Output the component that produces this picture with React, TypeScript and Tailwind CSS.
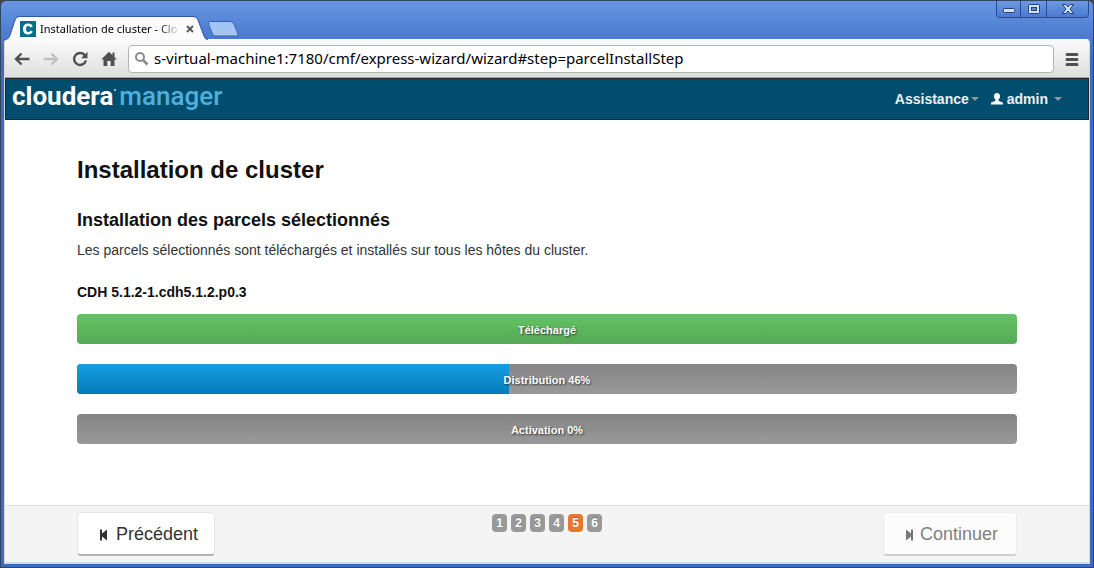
import type { ReactNode } from 'react';

const steps = [1, 2, 3, 4, 5, 6];
const currentStep = 5;

type Stage = { label: string; percent: number; fill: string };

const stages: Stage[] = [
  { label: 'Téléchargé', percent: 100, fill: 'from-[#62c462] to-[#57a957]' },
  { label: 'Distribution 46%', percent: 46, fill: 'from-[#179de3] to-[#047cbb]' },
  { label: 'Activation 0%', percent: 0, fill: 'from-[#179de3] to-[#047cbb]' },
];

function WindowButton({ label, className, children }: { label: string; className: string; children: ReactNode }) {
  return (
    <button
      type="button"
      aria-label={label}
      className={`flex h-4 items-center justify-center border-r border-[#2b4a8c] bg-linear-to-b from-[#6d9ae0] to-[#4a79d0] ${className}`}
    >
      {children}
    </button>
  );
}

function TitleBar() {
  return (
    <div className="flex h-9.5 items-end justify-between">
      <div className="flex items-end">
        <div className="relative -mb-px flex h-6 w-51 items-center pt-0.5 pl-4">
          <svg className="absolute inset-0 h-6 w-51" viewBox="0 0 204 24" aria-hidden="true">
            <path d="M0 24C4 24 5 22 6 19L11 4Q12 1 15 1H190Q193 1 194 4L200 20Q201 24 204 24Z" fill="#fbfbfb" />
            <path d="M0 23.500C4 23.500 5 22 6 19L11 4Q12 .5 15 .5H190Q193 .5 194 4L200 20Q201 23.500 204 23.500" fill="none" stroke="#2f55a4" />
          </svg>
          <svg className="relative h-4 w-4 shrink-0" viewBox="0 0 16 16" aria-hidden="true">
            <rect width="16" height="16" fill="#04708a" />
            <path d="M12.800 5.200C11.800 3.200 10.300 2.500 8.200 2.500C5 2.500 3 4.600 3 8S5 13.500 8.200 13.500C10.300 13.500 11.800 12.800 12.800 10.800L10.300 9.500C9.800 10.500 9.200 11 8.300 11C6.800 11 6 9.800 6 8S6.800 5 8.300 5C9.200 5 9.800 5.500 10.300 6.500Z" fill="#fff" />
          </svg>
          <a
            href="#parcelInstallStep"
            className="relative ml-1 w-35 bg-linear-to-r from-black from-85% to-transparent bg-clip-text font-['Noto_Sans','Open_Sans',sans-serif] text-[11px] leading-4 whitespace-nowrap text-transparent"
          >
            Installation de cluster - Clo
          </a>
          <button type="button" aria-label="Fermer l'onglet" className="relative ml-0.5 flex h-4 w-4 items-center justify-center">
            <svg className="h-2 w-2" viewBox="0 0 8 8" aria-hidden="true">
              <path d="M1 1L7 7M7 1L1 7" stroke="#555" strokeWidth="1.800" />
            </svg>
          </button>
        </div>
        <button type="button" aria-label="Nouvel onglet" className="mb-0.5">
          <svg className="block h-4 w-8" viewBox="0 0 32 16" aria-hidden="true">
            <path d="M2.500 .5H22.500Q25 .5 26 3L30 13Q30.500 15 28.500 15H7.500Q5.500 15 4.500 13L.5 3Q0 .5 2.500 .5Z" fill="#a2c5f3" stroke="#3a62b4" />
          </svg>
        </button>
      </div>
      <div className="mr-px flex self-start rounded-b border border-t-0 border-r-0 border-[#2b4a8c]">
        <WindowButton label="Réduire" className="w-6 rounded-bl">
          <svg className="mt-1 h-1.5 w-3" viewBox="0 0 12 6" aria-hidden="true">
            <rect x=".5" y=".5" width="11" height="4" rx="1" fill="#d5e2f6" stroke="#23427f" />
          </svg>
        </WindowButton>
        <WindowButton label="Agrandir" className="w-6.5">
          <svg className="h-2.5 w-3" viewBox="0 0 12 10" aria-hidden="true">
            <rect x=".5" y=".5" width="11" height="9" rx="1" fill="#d5e2f6" stroke="#23427f" />
            <rect x="3.500" y="3.500" width="5" height="3" fill="#5c8ad8" stroke="#23427f" />
          </svg>
        </WindowButton>
        <WindowButton label="Fermer" className="w-10.5 rounded-br">
          <svg className="h-2.5 w-3" viewBox="0 0 12 10" aria-hidden="true">
            <path d="M.5 .5H4L6 3L8 .5H11.500L8 5L11.500 9.500H8L6 7L4 9.500H.5L4 5Z" fill="#d5e2f6" stroke="#23427f" strokeLinejoin="round" />
          </svg>
        </WindowButton>
      </div>
    </div>
  );
}

function ToolButton({ label, children }: { label: string; children: ReactNode }) {
  return (
    <button type="button" aria-label={label} className="flex h-6 w-7 items-center justify-center">
      <svg className="h-4 w-4" viewBox="0 0 16 16" aria-hidden="true">
        {children}
      </svg>
    </button>
  );
}

function Toolbar() {
  return (
    <div className="flex h-9.5 shrink-0 items-center rounded-t-sm border-b border-b-[#a5a5a5] bg-linear-to-b from-[#fbfbfb] to-[#dedede] pr-1.25 pl-0.75">
      <div className="mr-1.25 flex gap-px">
        <ToolButton label="Précédent">
          <path d="M15.500 8H2.500M7.500 2.500L2 8L7.500 13.500" fill="none" stroke="#505050" strokeWidth="2.400" />
        </ToolButton>
        <ToolButton label="Suivant">
          <path d="M.5 8H13.500M8.500 2.500L14 8L8.500 13.500" fill="none" stroke="#c0c0c0" strokeWidth="2.400" />
        </ToolButton>
        <ToolButton label="Actualiser">
          <path d="M13 4.500A6 6 0 1 0 13.900 9.500" fill="none" stroke="#505050" strokeWidth="2.400" />
          <path d="M15.500 .8V7.300H9Z" fill="#505050" />
        </ToolButton>
        <ToolButton label="Accueil">
          <path d="M8 .8L11.500 4.200V1.500H13.500V6.100L15.800 8.500H13.500V15H9.700V10H6.300V15H2.500V8.500H.2Z" fill="#505050" />
        </ToolButton>
      </div>
      <div className="flex h-7 grow items-center rounded-sm border border-[#b4b4b4] bg-white pl-1.25">
        <svg className="h-4 w-4 shrink-0" viewBox="0 0 16 16" aria-hidden="true">
          <circle cx="6" cy="6" r="4" fill="none" stroke="#8a8a8a" strokeWidth="2" />
          <path d="M9 9L13.500 13.500" stroke="#8a8a8a" strokeWidth="2.600" />
        </svg>
        <input
          type="text"
          aria-label="Adresse"
          defaultValue="s-virtual-machine1:7180/cmf/express-wizard/wizard#step=parcelInstallStep"
          className="mb-0.5 ml-1 min-w-0 grow bg-transparent font-['Noto_Sans','Open_Sans',sans-serif] text-[15px] leading-6 text-black outline-none"
        />
      </div>
      <button type="button" aria-label="Menu" className="ml-1.5 flex h-6 w-6 items-center justify-center">
        <svg className="h-3.5 w-3.5" viewBox="0 0 14 14" aria-hidden="true">
          <path d="M2 2.500H12M2 7.500H12M2 12.500H12" stroke="#505050" strokeWidth="3" strokeLinecap="round" />
        </svg>
      </button>
    </div>
  );
}

function Caret() {
  return (
    <svg className="h-1 w-2" viewBox="0 0 8 4" aria-hidden="true">
      <path d="M0 0H8L4 4Z" fill="#8c9aa0" />
    </svg>
  );
}

function Header() {
  return (
    <header className="flex h-10.5 shrink-0 items-center justify-between border border-[#252525] bg-[#004d6e] pr-6.5 pl-1.5">
      <a href="#accueil" className="mb-1.5 flex items-center gap-1.5 font-['Roboto','Open_Sans',sans-serif] text-[26px] leading-8">
        <span className="relative font-bold text-white">
          cloudera
          <svg className="absolute top-2 -right-1 h-1 w-1" viewBox="0 0 4 4" aria-hidden="true">
            <circle cx="2" cy="2" r="1.200" fill="#9bb5c2" />
          </svg>
        </span>
        <span className="font-medium text-[#4fb0dc]">manager</span>
      </a>
      <nav className="flex items-center gap-3 text-sm font-bold text-[#eee]">
        <button type="button" className="flex items-center gap-0.5">
          Assistance
          <Caret />
        </button>
        <button type="button" className="flex items-center">
          <svg className="mr-1 h-3 w-3" viewBox="0 0 12 12" aria-hidden="true">
            <path d="M6 0C8 0 9 1.400 9 3.200C9 4.800 8.300 5.900 7.500 6.600V7.600C8 8.600 12 8.900 12 10.400V11.500H0V10.400C0 8.900 4 8.600 4.500 7.600V6.600C3.700 5.900 3 4.800 3 3.200C3 1.400 4 0 6 0Z" fill="#fff" />
          </svg>
          <span className="mr-1.5">admin</span>
          <Caret />
        </button>
      </nav>
    </header>
  );
}

function StageBar({ label, percent, fill }: Stage) {
  return (
    <div
      role="progressbar"
      aria-label={label}
      aria-valuenow={percent}
      className="grid h-7.5 overflow-hidden rounded bg-linear-to-b from-[#858585] to-[#999]"
    >
      <div className={`col-start-1 row-start-1 bg-linear-to-b ${fill}`} style={{ width: `${percent}%` }} />
      <span className="relative col-start-1 row-start-1 self-center pt-0.5 text-center text-[11px] leading-4 font-bold text-white [text-shadow:1px_1px_2px_#333]">
        {label}
      </span>
    </div>
  );
}

const navButton =
  'flex h-11 items-center rounded border border-b-2 pl-5 text-lg leading-6';

function Footer() {
  return (
    <footer className="shrink-0 border-t border-[#ddd] bg-[#f4f4f4] px-18 pt-1.5 pb-1.5">
      <div className="grid grid-cols-3 items-start">
        <button type="button" className={`${navButton} justify-self-start border-[#e6e6e6] border-b-[#b3b3b3] bg-white pr-4 text-[#333]`}>
          <svg className="mt-0.5 mr-2 h-3 w-2.5" viewBox="0 0 10 12" aria-hidden="true">
            <path d="M2 .5H4V4.500L9 .5V11.500L4 7.500V11.500H2Z" fill="#333" />
          </svg>
          Précédent
        </button>
        <ol className="mt-0.5 flex justify-center gap-1 text-xs leading-4 font-bold text-white">
          {steps.map((step) => (
            <li
              key={step}
              aria-current={step === currentStep ? 'step' : undefined}
              className={`h-4.5 w-3.75 rounded-sm pt-px text-center [text-shadow:0_-1px_0_rgba(0,0,0,0.25)] ${step === currentStep ? 'bg-[#e8772e]' : 'bg-[#999]'}`}
            >
              {step}
            </li>
          ))}
        </ol>
        <button type="button" disabled className={`${navButton} justify-self-end border-[#ececec] border-b-[#cfcfcf] bg-[#fcfcfc] pr-4.5 text-[#808080]`}>
          <svg className="mt-0.5 mr-1.5 h-3 w-2.5" viewBox="0 0 10 12" aria-hidden="true">
            <path d="M9 .5H7V4.500L2 .5V11.500L7 7.500V11.500H9Z" fill="#777" />
          </svg>
          Continuer
        </button>
      </div>
    </footer>
  );
}

export default function App() {
  return (
    <div className="bg-[#444]">
      <div className="flex min-h-screen flex-col rounded-t-md border border-[#35445f] bg-linear-to-b from-[#6796e2] to-[#3c6bc5] to-10% px-[3px] pb-[3px] font-['Liberation_Sans',Arial,sans-serif]">
        <TitleBar />
        <div className="flex grow flex-col rounded-t-sm border border-b-2 border-[#d8d8d8] border-t-[#fbfbfb] bg-white">
          <Toolbar />
          <Header />
          <main className="grow px-18 pt-8.5 pb-15 text-[#111]">
            <h1 className="text-2xl leading-8 font-bold">Installation de cluster</h1>
            <h2 className="mt-5 text-lg leading-7 font-bold">Installation des parcels sélectionnés</h2>
            <p className="mt-1.5 text-sm leading-5 text-[#333]">
              Les parcels sélectionnés sont téléchargés et installés sur tous les hôtes du cluster.
            </p>
            <h3 className="mt-5.5 text-sm leading-5 font-bold">CDH 5.1.2-1.cdh5.1.2.p0.3</h3>
            <div className="mt-3 flex flex-col gap-5">
              {stages.map((stage) => (
                <StageBar key={stage.label} {...stage} />
              ))}
            </div>
          </main>
          <Footer />
        </div>
      </div>
    </div>
  );
}
